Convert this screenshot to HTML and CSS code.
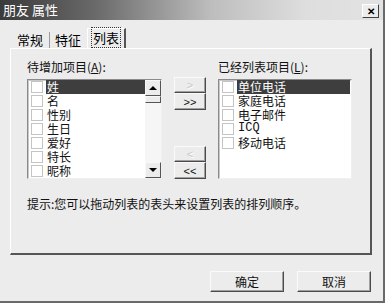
FILE: index.html
```html
<!DOCTYPE HTML><html>
<head>
  <title>朋友 属性</title>
  <meta name="viewport" content="width=device-width, initial-scale=1">
  <link rel="stylesheet" href="styles.css">
</head>
<body>
  <div class="window">
    <div class="titlebar">
      <span class="title">朋友 属性</span>
      <span class="close">&#x2715;</span>
    </div>
    <div class="tabs">
      <div class="tab">常规</div>
      <div class="tab sep">特征</div>
      <div class="tab active"><span class="focus">列表</span></div>
    </div>
    <div class="panel">
      <div class="lists">
        <div class="label">待增加项目(<u>A</u>):</div>
        <div></div>
        <div class="label">已经列表项目(<u>L</u>):</div>

        <div class="listbox">
          <div class="items">
            <div class="item selected"><span class="check"></span><span class="text">姓</span></div>
            <div class="item"><span class="check"></span><span class="text">名</span></div>
            <div class="item"><span class="check"></span><span class="text">性别</span></div>
            <div class="item"><span class="check"></span><span class="text">生日</span></div>
            <div class="item"><span class="check"></span><span class="text">爱好</span></div>
            <div class="item"><span class="check"></span><span class="text">特长</span></div>
            <div class="item"><span class="check"></span><span class="text">昵称</span></div>
          </div>
          <div class="scrollbar">
            <div class="sbtn"><span class="arrow up"></span></div>
            <div class="thumb"></div>
            <div class="track"></div>
            <div class="sbtn"><span class="arrow down"></span></div>
          </div>
        </div>

        <div class="movebtns">
          <div class="group">
            <button class="button small disabled">&gt;</button>
            <button class="button small">&gt;&gt;</button>
          </div>
          <div class="group">
            <button class="button small disabled">&lt;</button>
            <button class="button small">&lt;&lt;</button>
          </div>
        </div>

        <div class="listbox">
          <div class="items">
            <div class="item selected"><span class="check"></span><span class="text">单位电话</span></div>
            <div class="item"><span class="check"></span><span class="text">家庭电话</span></div>
            <div class="item"><span class="check"></span><span class="text">电子邮件</span></div>
            <div class="item"><span class="check"></span><span class="text mono">ICQ</span></div>
            <div class="item"><span class="check"></span><span class="text">移动电话</span></div>
          </div>
        </div>
      </div>
      <p class="hint">提示:您可以拖动列表的表头来设置列表的排列顺序。</p>
    </div>
    <div class="footer">
      <button class="button big">确定</button>
      <button class="button big">取消</button>
    </div>
  </div>
</body>
</html>
```

FILE: styles.css
```css
html {
  font-family: "Noto Sans CJK SC", "Liberation Sans", sans-serif;
  font-size: 12px;
}
body {
  margin: 0;
  background-color: #ececec;
}
.window {
  width: 383px;
  height: 301px;
  background-color: #ececec;
  border-right: 2px solid #6a6a6a;
  border-bottom: 2px solid #6a6a6a;
  display: flex;
  flex-direction: column;
}
.titlebar {
  height: 20px;
  flex-shrink: 0;
  background: linear-gradient(to right, #3a3a3a 0%, #6a6a6a 25%, #bdbdbd 55%, #dedede 80%, #e2e2e2 100%);
  display: flex;
  align-items: center;
  justify-content: space-between;
  padding: 0 4px 0 3px;
}
.title {
  color: #fff;
  font-size: 13px;
  line-height: 20px;
}
.close {
  width: 15px;
  height: 12px;
  background-color: #ececec;
  border: 1px solid;
  border-color: #fff #404040 #404040 #fff;
  font-size: 10px;
  font-weight: bold;
  line-height: 12px;
  text-align: center;
  color: #000;
  margin-top: 1px;
}
.tabs {
  display: flex;
  align-items: flex-end;
  margin: 9px 0 0 12px;
  height: 19px;
  flex-shrink: 0;
}
.tab {
  padding: 0 5px;
  height: 16px;
  line-height: 16px;
  font-size: 13px;
  color: #000;
}
.sep {
  border-left: 1px solid #9a9a9a;
  margin-left: 1px;
}
.tab.active {
  height: 19px;
  line-height: 18px;
  border-left: 1px solid #fff;
  border-right: 2px solid #555;
  border-top: 1px solid #fff;
  margin-left: 1px;
  padding: 0 3px;
}
.focus {
  border: 1px dotted #333;
  padding: 0 1px;
}
.panel {
  box-sizing: border-box;
  flex-shrink: 0;
  margin: 0 11px 0 10px;
  height: 207px;
  border-top: 1px solid #fff;
  border-left: 1px solid #fff;
  border-right: 2px solid #555;
  border-bottom: 2px solid #555;
  padding: 11px 0 0 16px;
}
.lists {
  display: grid;
  grid-template-columns: 135px 32px 134px;
  grid-template-rows: 19px 100px;
  column-gap: 12px;
}
.label {
  line-height: 14px;
  color: #111;
}
.listbox {
  display: flex;
  background-color: #fff;
  border: 1px solid;
  border-color: #8a8a8a #f0f0f0 #f0f0f0 #8a8a8a;
  box-shadow: inset 1px 1px 0 #c8c8c8;
  padding: 0 1px 0 2px;
  overflow: hidden;
}
.items {
  flex: 1;
}
.item {
  display: flex;
  align-items: center;
  height: 14px;
  color: #111;
}
.check {
  width: 10px;
  height: 10px;
  border: 1px solid #c4c4c4;
  margin: 0 3px 0 1px;
  background-color: #fff;
}
.text {
  flex: 1;
  height: 14px;
  line-height: 13px;
  font-size: 12px;
  padding-left: 1px;
}
.mono {
  font-family: "Liberation Mono", monospace;
  font-size: 12px;
}
.selected .text {
  background-color: #3e3e3e;
  color: #fff;
}
.scrollbar {
  width: 16px;
  display: flex;
  flex-direction: column;
  background-color: #f6f6f6;
  margin-right: -1px;
}
.sbtn, .thumb {
  height: 14px;
  background-color: #ececec;
  border: 1px solid;
  border-color: #f8f8f8 #555 #555 #f8f8f8;
  display: flex;
  align-items: center;
  justify-content: center;
}
.thumb {
  height: 5px;
}
.track {
  flex: 1;
}
.arrow {
  width: 0;
  height: 0;
  border-left: 4px solid transparent;
  border-right: 4px solid transparent;
}
.arrow.up {
  border-bottom: 4px solid #000;
}
.arrow.down {
  border-top: 4px solid #000;
}
.movebtns {
  display: flex;
  flex-direction: column;
  justify-content: space-between;
  margin: -2px 0 0 0;
}
.group {
  display: flex;
  flex-direction: column;
}
.button {
  font-family: "Liberation Sans", "Noto Sans CJK SC", sans-serif;
  background-color: #ececec;
  border: 1px solid;
  border-color: #fafafa #4a4a4a #4a4a4a #fafafa;
  box-shadow: inset -1px -1px 0 #a0a0a0;
  color: #111;
  padding: 0;
  margin: 0;
}
.small {
  width: 32px;
  height: 16px;
  font-size: 11px;
  line-height: 12px;
}
.small + .small {
  height: 17px;
}
.disabled {
  color: #c8c8c8;
  text-shadow: 1px 1px 0 #fff;
}
.hint {
  margin: 16px 0 0 0;
  font-size: 12px;
  color: #111;
}
.footer {
  display: flex;
  justify-content: flex-end;
  gap: 13px;
  margin: 16px 12px 0 0;
}
.big {
  font-family: "Noto Sans CJK SC", sans-serif;
  width: 74px;
  height: 21px;
  font-size: 12px;
}
```
